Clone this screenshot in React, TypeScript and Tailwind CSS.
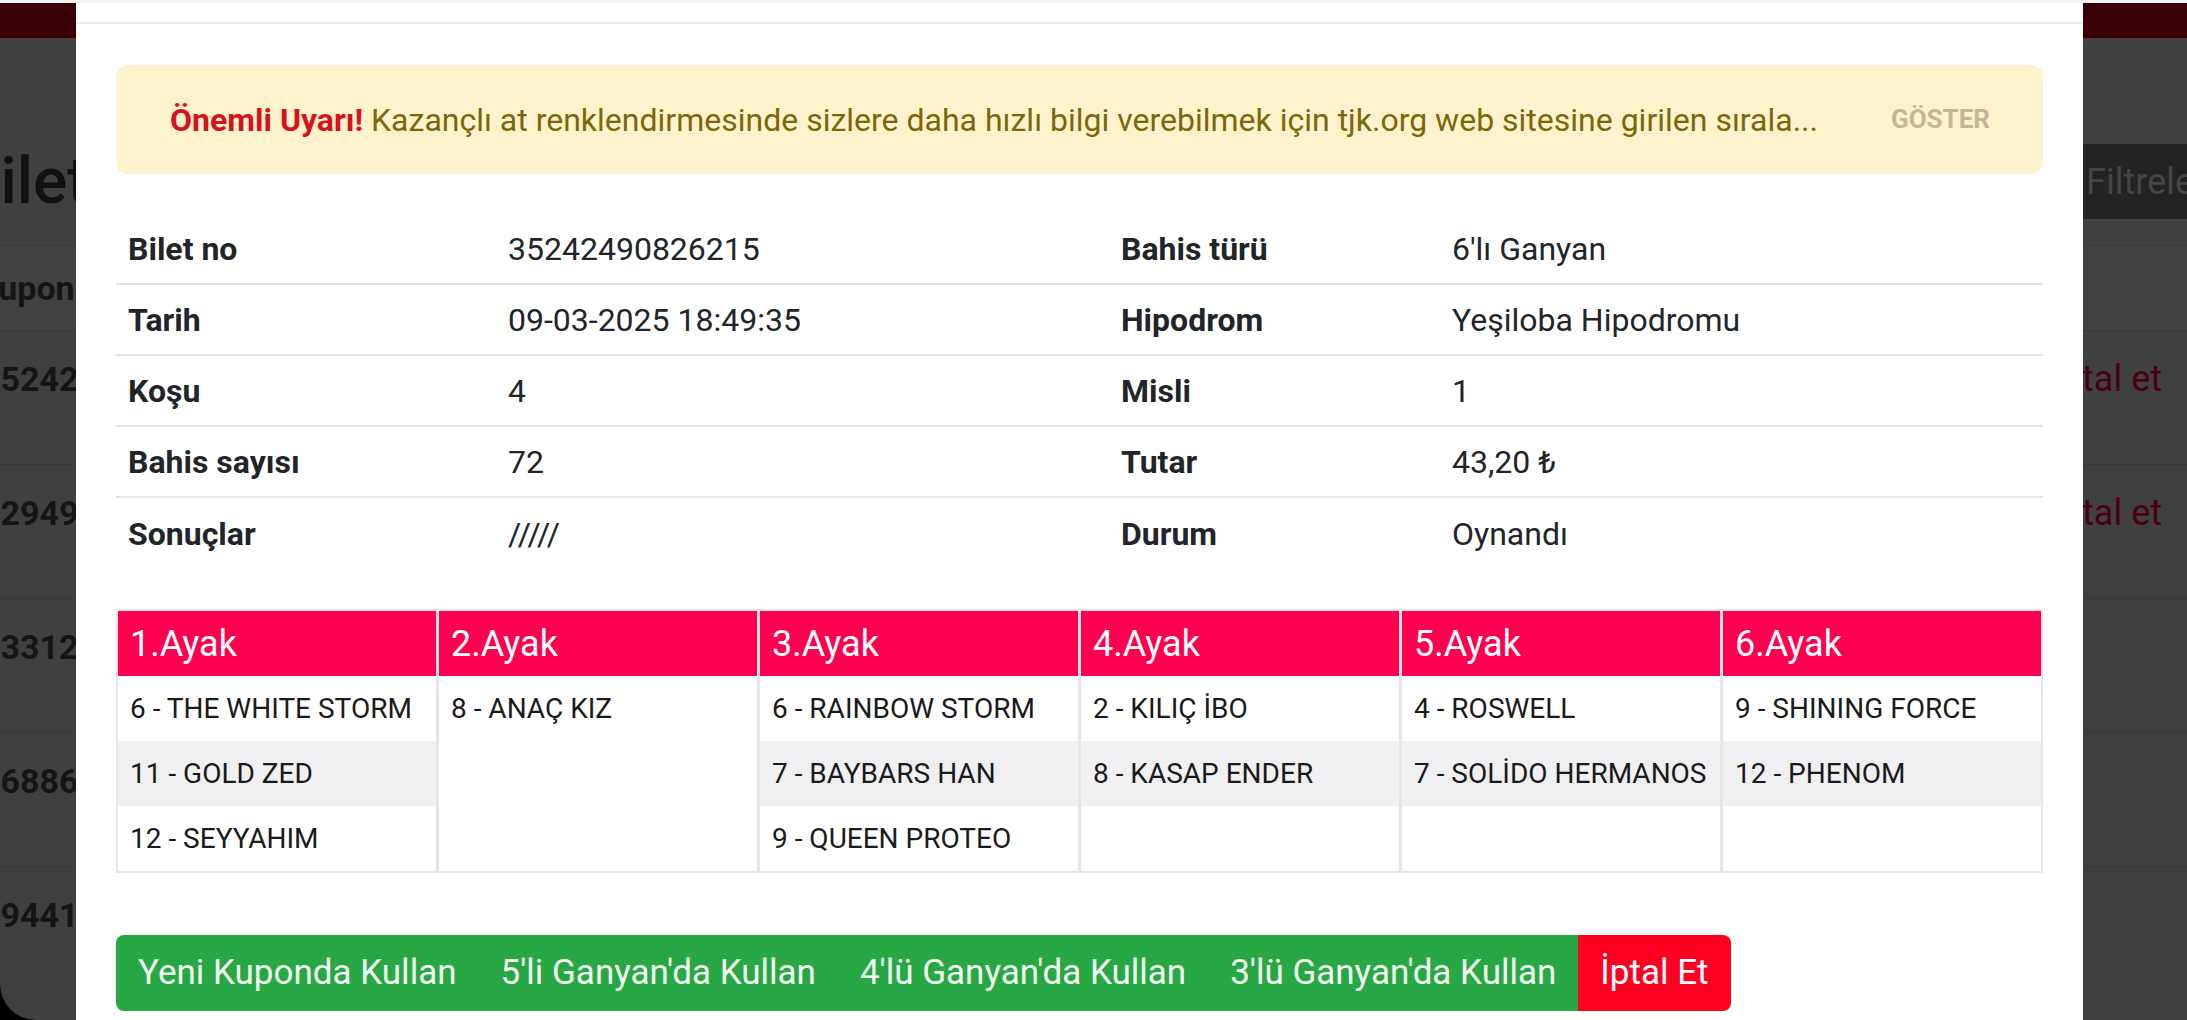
import React from 'react';

const details: [string, string, string, string][] = [
  ['Bilet no', '35242490826215', 'Bahis türü', "6'lı Ganyan"],
  ['Tarih', '09-03-2025 18:49:35', 'Hipodrom', 'Yeşiloba Hipodromu'],
  ['Koşu', '4', 'Misli', '1'],
  ['Bahis sayısı', '72', 'Tutar', '43,20 ₺'],
  ['Sonuçlar', '/////', 'Durum', 'Oynandı'],
];

const legs: string[][] = [
  ['6 - THE WHITE STORM', '11 - GOLD ZED', '12 - SEYYAHIM'],
  ['8 - ANAÇ KIZ'],
  ['6 - RAINBOW STORM', '7 - BAYBARS HAN', '9 - QUEEN PROTEO'],
  ['2 - KILIÇ İBO', '8 - KASAP ENDER'],
  ['4 - ROSWELL', '7 - SOLİDO HERMANOS'],
  ['9 - SHINING FORCE', '12 - PHENOM'],
];

const bgRows = ['35242490826215', '72949110338271', '53312044198853', '16886213007740', '29441378652019'];

const buttons = ['Yeni Kuponda Kullan', "5'li Ganyan'da Kullan", "4'lü Ganyan'da Kullan", "3'lü Ganyan'da Kullan"];

// page behind the dark overlay
const Background: React.FC = () => (
  <div className="flex h-[1020px] flex-col overflow-hidden rounded-bl-[36px] bg-[#404040]">
    <div className="h-[3px] shrink-0 bg-[#f3f3f3]" />
    <div className="h-[35px] shrink-0 bg-[#3a0008]" />
    <div className="flex h-[207px] shrink-0 items-center justify-between pt-[80px]">
      <h1 className="ml-[-40px] text-[64px] font-medium leading-none text-[#111]">Biletlerim</h1>
      <div className="flex h-[75px] w-[260px] items-center bg-[#232323] pl-[159px] text-[36px] text-[#454545]">
        Filtrele
      </div>
    </div>
    <div className="flex h-[85px] shrink-0 items-center border-t border-[#3a3a3a] bg-[#424242]">
      <span className="ml-[-23px] text-[34px] font-bold text-[#151515]">Kupon No</span>
    </div>
    {bgRows.map((n, i) => (
      <div key={n} className="flex h-[134px] shrink-0 justify-between border-t border-[#383838] pt-[26px]">
        <span className="ml-[-19px] text-[34px] font-bold leading-[44px] text-[#151515]">{n}</span>
        {i < 2 && <span className="mr-[25px] text-[36px] leading-[44px] text-[#4a0010]">İptal et</span>}
      </div>
    ))}
  </div>
);

const App: React.FC = () => {
  return (
    <div className="relative h-[1020px] w-[2187px] overflow-hidden bg-black font-['Roboto','DejaVu_Sans',sans-serif]">
      <Background />

      {/* modal */}
      <div className="absolute left-[76px] top-[3px] h-[1100px] w-[2007px] bg-white">
        <div className="h-[21px] border-b-2 border-[#e9ecef]" />
        <div className="px-[40px] pt-[41px]">
          {/* warning */}
          <div className="flex h-[109px] items-center justify-between rounded-xl bg-[#fff3cd] pl-[54px] pr-[53px]">
            <p className="whitespace-nowrap text-[32px] text-[#7d6608]">
              <span className="font-bold text-[#d4141c]">Önemli Uyarı!</span> Kazançlı at renklendirmesinde sizlere
              daha hızlı bilgi verebilmek için tjk.org web sitesine girilen sırala...
            </p>
            <button className="text-[26px] font-bold uppercase text-[#c2b898]">Göster</button>
          </div>

          {/* ticket details */}
          <div className="mt-[40px] grid grid-cols-[380px_613px_331px_603px]">
            {details.map((row, i) => (
              <React.Fragment key={row[0]}>
                {row.map((cell, j) => (
                  <div
                    key={j}
                    className={`flex h-[71px] items-center px-[12px] text-[32px] text-[#212529] ${
                      j % 2 === 0 ? 'font-bold' : ''
                    } ${i < details.length - 1 ? 'border-b-2 border-[#e2e5e8]' : ''}`}
                  >
                    {cell}
                  </div>
                ))}
              </React.Fragment>
            ))}
          </div>

          {/* legs */}
          <div className="mt-[40px] grid grid-cols-6 gap-[3px] border-2 border-[#e6e6e6] bg-[#e6e6e6]">
            {legs.map((horses, i) => (
              <div key={i} className="flex flex-col bg-white">
                <div className="flex h-[65px] items-center bg-[#ff0050] px-[12px] text-[36px] text-white">
                  {i + 1}.Ayak
                </div>
                {horses.map((h, k) => (
                  <div
                    key={h}
                    className={`flex h-[65px] items-center whitespace-nowrap px-[12px] text-[28px] text-[#1a1a1a] ${
                      k % 2 === 1 ? 'bg-[#f0f0f2]' : 'bg-white'
                    }`}
                  >
                    {h}
                  </div>
                ))}
                {horses.length < 3 && <div style={{ height: (3 - horses.length) * 65 }} />}
              </div>
            ))}
          </div>

          {/* actions */}
          <div className="mt-[62px] inline-flex h-[76px] overflow-hidden rounded-[8px]">
            {buttons.map((b) => (
              <button key={b} className="bg-[#28a745] px-[22px] text-[35px] text-[#f2fff2]">
                {b}
              </button>
            ))}
            <button className="bg-[#ff0022] px-[22px] text-[35px] text-white">İptal Et</button>
          </div>
        </div>
      </div>
    </div>
  );
};

export default App;
